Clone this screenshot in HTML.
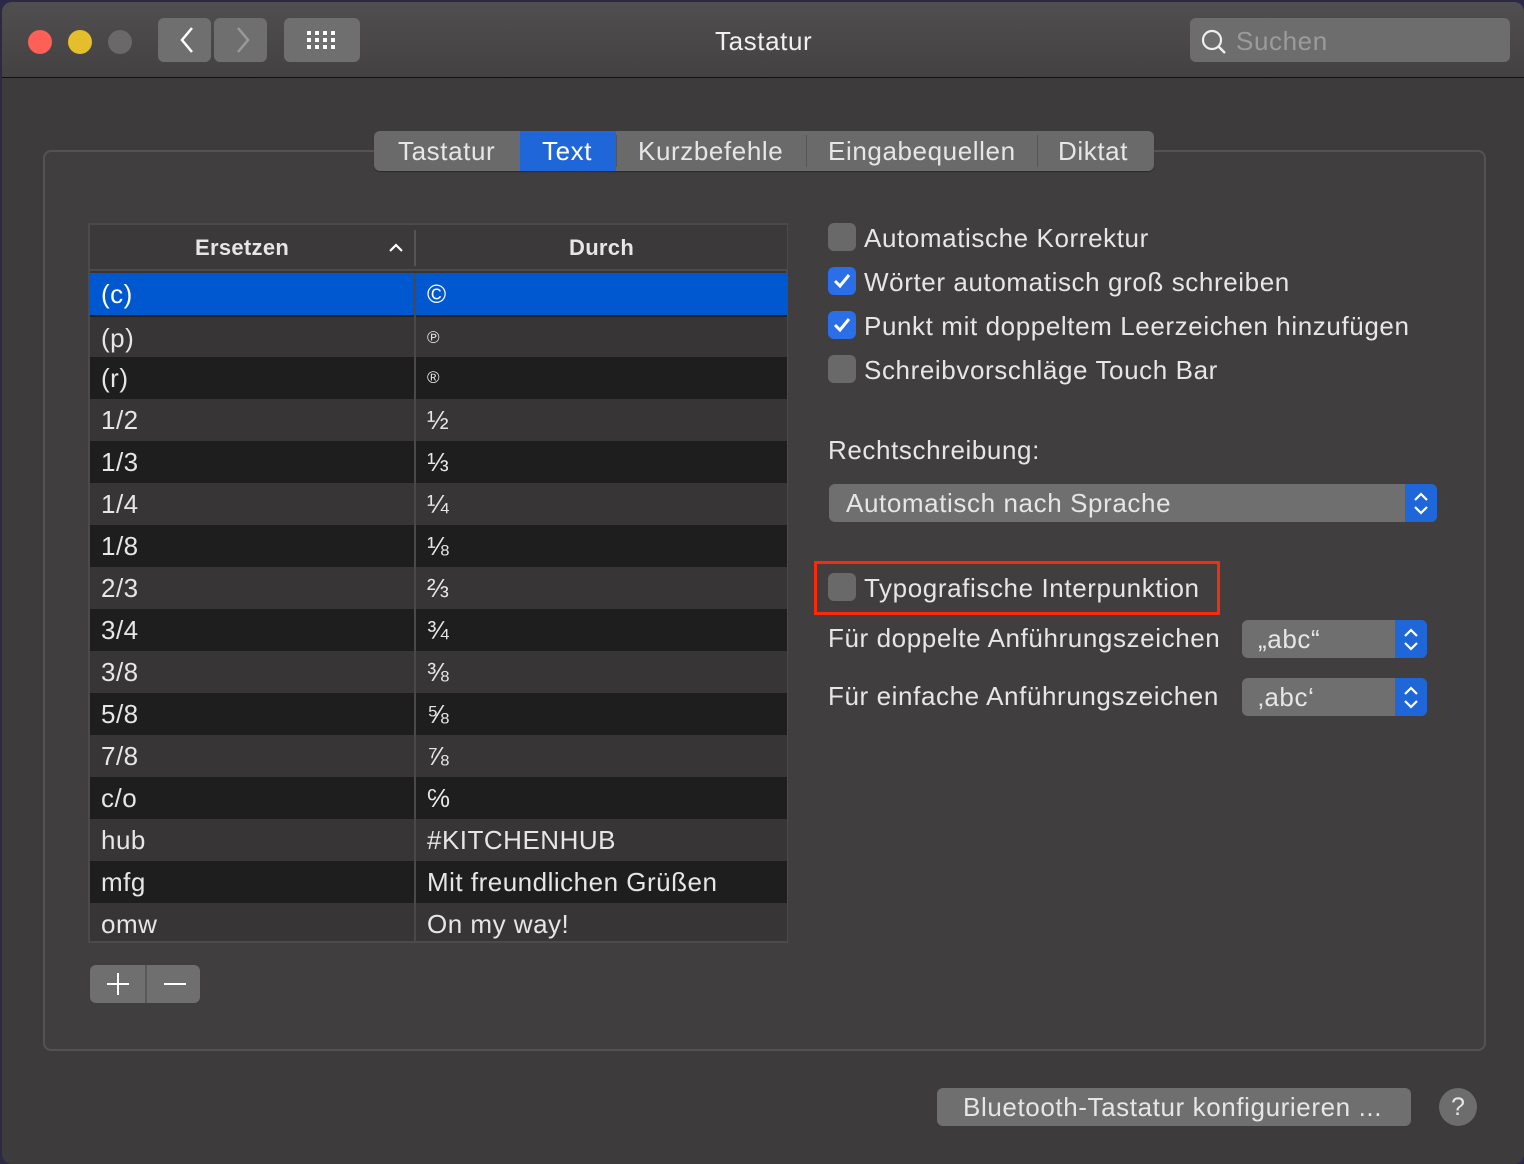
<!DOCTYPE html>
<html><head><meta charset="utf-8"><style>
*{margin:0;padding:0;box-sizing:border-box}
body{width:1524px;height:1164px;background:#2b2946;font-family:"Liberation Sans",sans-serif;color:#e6e6e6;position:relative;overflow:hidden}
.win{position:absolute;left:2px;top:2px;width:1522px;height:1162px;background:#3d3b3c;border-radius:10px;overflow:hidden}
.tb{position:absolute;left:0;top:0;width:100%;height:76px;background:linear-gradient(#504e4e,#434141);border-bottom:1px solid #111}
.a{position:absolute}
.dot{position:absolute;top:28px;width:24px;height:24px;border-radius:50%}
.btn{position:absolute;background:#706f6f;border-radius:6px}
.t{position:absolute;white-space:nowrap;font-size:26px;line-height:30px;letter-spacing:0.6px}
.cb{position:absolute;left:826px;width:28px;height:28px;border-radius:6px;background:#6a6969}
.cb.on{background:#2a6ee8}
.row{position:absolute;left:88px;width:697px;height:42px}
.row span{position:absolute;top:6px;font-size:26px;line-height:30px;letter-spacing:0.5px}
.pop{position:absolute;background:#706f6f;border-radius:6px}
.ar{position:absolute;right:0;top:0;bottom:0;width:32px;background:#1f66d8;border-radius:0 6px 6px 0}
</style></head><body>
<div class="win">
<div class="tb"></div>
<div class="dot" style="left:26px;background:#fe5f57"></div>
<div class="dot" style="left:66px;background:#e5bf2b"></div>
<div class="dot" style="left:106px;background:#6a6868"></div>
<div class="btn" style="left:156px;top:16px;width:53px;height:44px"></div>
<div class="btn" style="left:212px;top:16px;width:53px;height:44px"></div>
<svg class="a" style="left:156px;top:16px" width="110" height="44"><path d="M34 10 L24 22 L34 34" stroke="#fff" stroke-width="2.5" fill="none"/><path d="M80 10 L90 22 L80 34" stroke="#9a9999" stroke-width="2.5" fill="none"/></svg>
<div class="btn" style="left:282px;top:16px;width:76px;height:44px"></div>
<svg class="a" style="left:305px;top:29px" width="32" height="20" fill="#fff"><rect x="0" y="0" width="4" height="4"/><rect x="8" y="0" width="4" height="4"/><rect x="16" y="0" width="4" height="4"/><rect x="24" y="0" width="4" height="4"/><rect x="0" y="7" width="4" height="4"/><rect x="8" y="7" width="4" height="4"/><rect x="16" y="7" width="4" height="4"/><rect x="24" y="7" width="4" height="4"/><rect x="0" y="14" width="4" height="4"/><rect x="8" y="14" width="4" height="4"/><rect x="16" y="14" width="4" height="4"/><rect x="24" y="14" width="4" height="4"/></svg>
<div class="t" style="left:713px;top:24px;color:#f0f0f0">Tastatur</div>
<div class="btn" style="left:1188px;top:16px;width:320px;height:44px;background:#6e6d6d"></div>
<svg class="a" style="left:1198px;top:26px" width="28" height="28"><circle cx="12" cy="12" r="9" stroke="#eee" stroke-width="2.2" fill="none"/><path d="M18.5 18.5 L25 25" stroke="#eee" stroke-width="2.4"/></svg>
<div class="t" style="left:1234px;top:24px;color:#9c9b9b">Suchen</div>

<div class="a" style="left:41px;top:148px;width:1443px;height:901px;border:2px solid #545253;border-radius:8px;background:#403e3f"></div>
<div class="a" style="left:372px;top:129px;width:780px;height:40px;background:#6b6a6a;border-radius:6px;box-shadow:0 1px 1px #2a2a2a"></div>
<div class="a" style="left:518px;top:129px;width:96px;height:40px;background:#1f66d8"></div>
<div class="a" style="left:614px;top:133px;width:1px;height:32px;background:#555"></div>
<div class="a" style="left:804px;top:133px;width:1px;height:32px;background:#555"></div>
<div class="a" style="left:1035px;top:133px;width:1px;height:32px;background:#555"></div>
<div class="t" style="left:396px;top:134px">Tastatur</div>
<div class="t" style="left:540px;top:134px;color:#fff">Text</div>
<div class="t" style="left:636px;top:134px">Kurzbefehle</div>
<div class="t" style="left:826px;top:134px">Eingabequellen</div>
<div class="t" style="left:1056px;top:134px">Diktat</div>

<div class="a" style="left:86px;top:221px;width:700px;height:720px;border:2px solid #4c4a4b;background:#363435"></div>
<div class="a" style="left:88px;top:223px;width:697px;height:46px;background:#3b393a;border-bottom:2px solid #4c4a4b"></div>
<div class="a" style="left:412px;top:228px;width:2px;height:36px;background:#555"></div>
<div class="t" style="left:193px;top:231px;font-size:22px;font-weight:bold;letter-spacing:0.3px">Ersetzen</div>
<svg class="a" style="left:386px;top:240px" width="16" height="12"><path d="M2 9 L8 3 L14 9" stroke="#fff" stroke-width="2.2" fill="none"/></svg>
<div class="t" style="left:567px;top:231px;font-size:22px;font-weight:bold;letter-spacing:0.3px">Durch</div>

<div class="row" style="top:271px;background:#0058d0;color:#fff"><span style="left:11px">(c)</span><span style="left:337px">©</span></div>
<div class="row" style="top:313px;background:#373536;border-top:2px solid #222"><span style="left:11px">(p)</span><span style="left:337px;font-size:17px">℗</span></div>
<div class="row" style="top:355px;background:#1f1e1f"><span style="left:11px">(r)</span><span style="left:337px;font-size:17px">®</span></div>
<div class="row" style="top:397px;background:#373536"><span style="left:11px">1/2</span><span style="left:337px">½</span></div>
<div class="row" style="top:439px;background:#1f1e1f"><span style="left:11px">1/3</span><span style="left:337px">⅓</span></div>
<div class="row" style="top:481px;background:#373536"><span style="left:11px">1/4</span><span style="left:337px">¼</span></div>
<div class="row" style="top:523px;background:#1f1e1f"><span style="left:11px">1/8</span><span style="left:337px">⅛</span></div>
<div class="row" style="top:565px;background:#373536"><span style="left:11px">2/3</span><span style="left:337px">⅔</span></div>
<div class="row" style="top:607px;background:#1f1e1f"><span style="left:11px">3/4</span><span style="left:337px">¾</span></div>
<div class="row" style="top:649px;background:#373536"><span style="left:11px">3/8</span><span style="left:337px">⅜</span></div>
<div class="row" style="top:691px;background:#1f1e1f"><span style="left:11px">5/8</span><span style="left:337px">⅝</span></div>
<div class="row" style="top:733px;background:#373536"><span style="left:11px">7/8</span><span style="left:337px">⅞</span></div>
<div class="row" style="top:775px;background:#1f1e1f"><span style="left:11px">c/o</span><span style="left:337px">℅</span></div>
<div class="row" style="top:817px;background:#373536"><span style="left:11px">hub</span><span style="left:337px">#KITCHENHUB</span></div>
<div class="row" style="top:859px;background:#1f1e1f"><span style="left:11px">mfg</span><span style="left:337px">Mit freundlichen Grüßen</span></div>
<div class="row" style="top:901px;height:38px;background:#373536"><span style="left:11px">omw</span><span style="left:337px">On my way!</span></div>
<div class="a" style="left:412px;top:271px;width:2px;height:668px;background:#4a4849"></div>

<div class="btn" style="left:88px;top:963px;width:110px;height:38px"></div>
<div class="a" style="left:143px;top:963px;width:2px;height:38px;background:#5a5959"></div>
<svg class="a" style="left:88px;top:963px" width="110" height="38"><path d="M17 19 H39 M28 8 V30 M74 19 H96" stroke="#fff" stroke-width="2"/></svg>

<div class="cb" style="top:221px"></div>
<div class="cb on" style="top:265px"></div>
<div class="cb on" style="top:309px"></div>
<div class="cb" style="top:353px"></div>
<svg class="a" style="left:826px;top:265px" width="28" height="76"><path d="M7 14 L12 19 L21 8 M7 58 L12 63 L21 52" stroke="#fff" stroke-width="3" fill="none"/></svg>
<div class="t" style="left:862px;top:221px">Automatische Korrektur</div>
<div class="t" style="left:862px;top:265px">Wörter automatisch groß schreiben</div>
<div class="t" style="left:862px;top:309px">Punkt mit doppeltem Leerzeichen hinzufügen</div>
<div class="t" style="left:862px;top:353px">Schreibvorschläge Touch Bar</div>
<div class="t" style="left:826px;top:433px">Rechtschreibung:</div>
<div class="pop" style="left:827px;top:482px;width:608px;height:38px"><div class="ar"></div></div>
<div class="t" style="left:844px;top:486px">Automatisch nach Sprache</div>
<div class="a" style="left:812px;top:559px;width:406px;height:54px;border:3px solid #fa2a0a"></div>
<div class="cb" style="top:571px"></div>
<div class="t" style="left:862px;top:571px">Typografische Interpunktion</div>
<div class="t" style="left:826px;top:621px">Für doppelte Anführungszeichen</div>
<div class="t" style="left:826px;top:679px">Für einfache Anführungszeichen</div>
<div class="pop" style="left:1240px;top:618px;width:185px;height:38px"><div class="ar"></div></div>
<div class="pop" style="left:1240px;top:676px;width:185px;height:38px"><div class="ar"></div></div>
<div class="t" style="left:1256px;top:622px">„abc“</div>
<div class="t" style="left:1256px;top:680px">‚abc‘</div>
<svg class="a" style="left:1403px;top:482px" width="32" height="38"><path d="M10 16 L16 10 L22 16 M10 23 L16 29 L22 23" stroke="#fff" stroke-width="2.2" fill="none"/></svg>
<svg class="a" style="left:1393px;top:618px" width="32" height="38"><path d="M10 16 L16 10 L22 16 M10 23 L16 29 L22 23" stroke="#fff" stroke-width="2.2" fill="none"/></svg>
<svg class="a" style="left:1393px;top:676px" width="32" height="38"><path d="M10 16 L16 10 L22 16 M10 23 L16 29 L22 23" stroke="#fff" stroke-width="2.2" fill="none"/></svg>

<div class="btn" style="left:935px;top:1086px;width:474px;height:38px"></div>
<div class="t" style="left:961px;top:1090px">Bluetooth-Tastatur konfigurieren ...</div>
<div class="a" style="left:1437px;top:1086px;width:38px;height:38px;border-radius:50%;background:#6e6d6d;text-align:center;font-size:25px;line-height:38px">?</div>
</div>
</body></html>
